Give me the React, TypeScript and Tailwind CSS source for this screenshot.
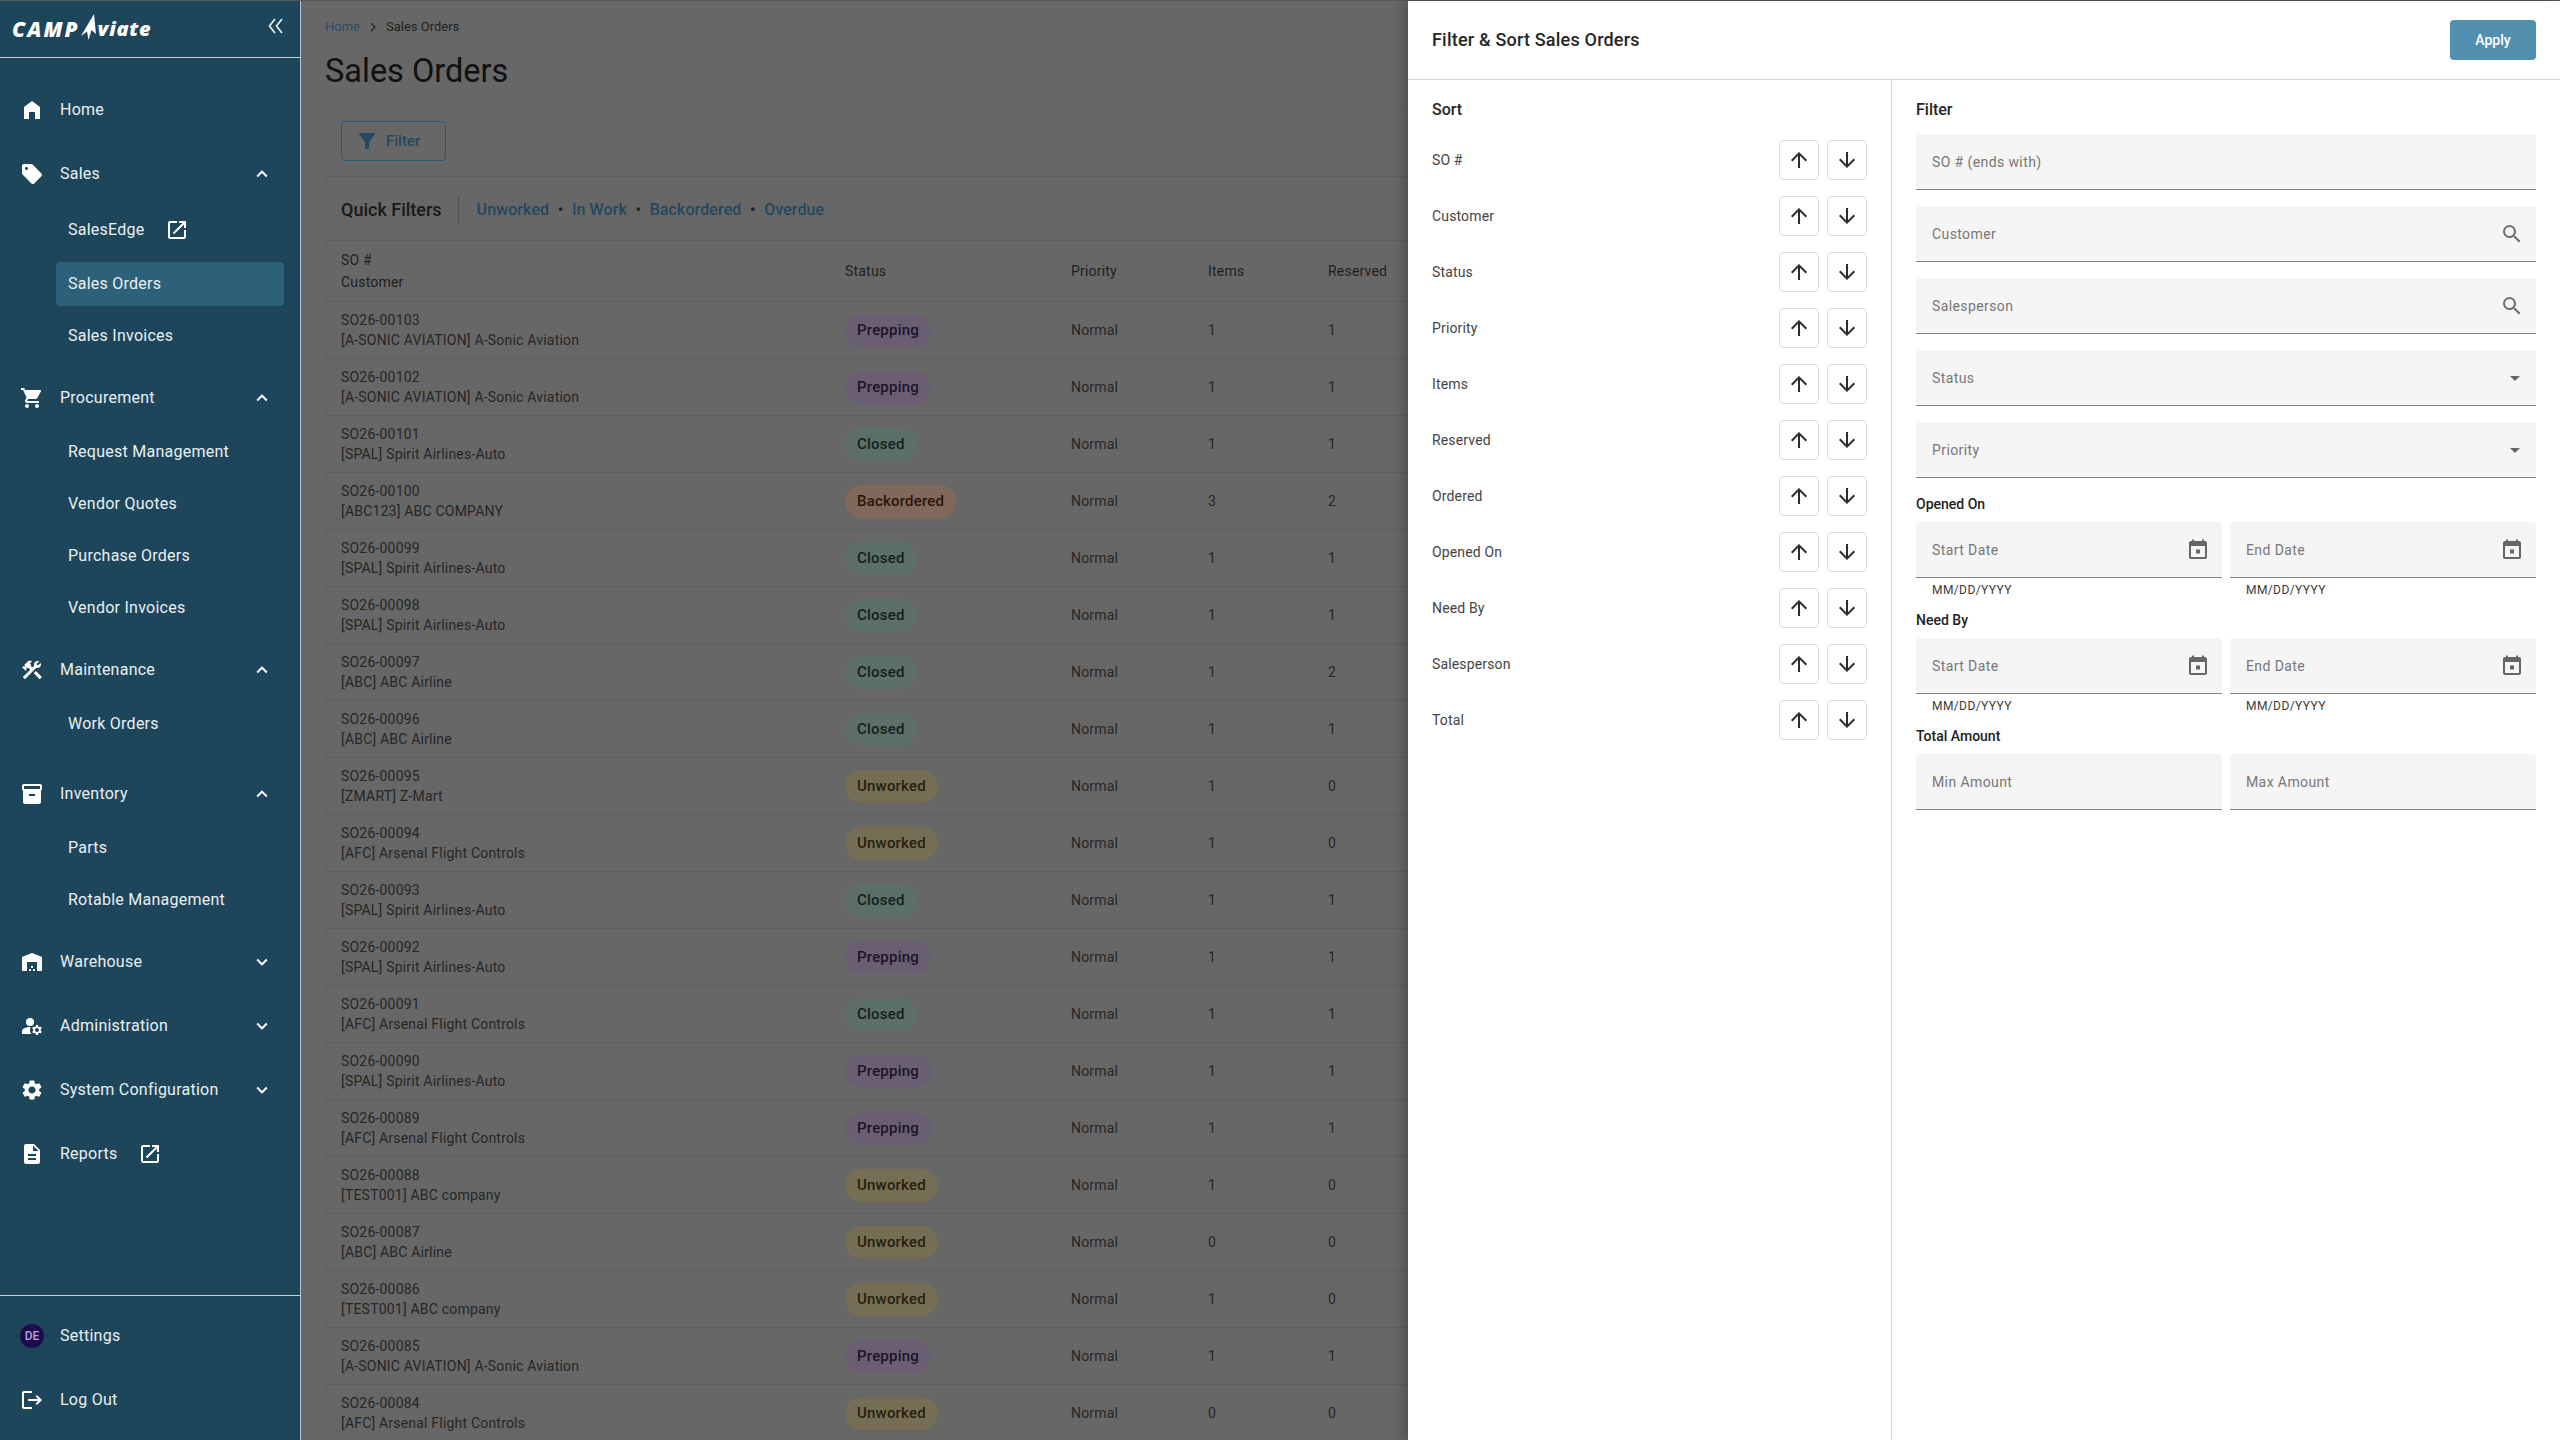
import React from "react";
import {
  MdHomeFilled, MdSell, MdShoppingCart, MdConstruction, MdInventory2, MdWarehouse, MdManageAccounts,
  MdSettings, MdDescription, MdLogout, MdOpenInNew, MdExpandLess, MdExpandMore, MdArrowUpward,
  MdArrowDownward, MdSearch, MdArrowDropDown, MdFilterAlt, MdChevronRight,
} from "react-icons/md";

const Top = ({ icon, label, chevron, ext, cls = "" }: { icon: React.ReactNode; label: string; chevron?: "up" | "down"; ext?: boolean; cls?: string }) => (
  <div className={`flex h-16 items-center pl-5 pr-[27px] text-[16px] tracking-[0.25px] text-[#e9eff2] ${cls}`}>
    <span className="flex w-6 justify-center text-white">{icon}</span>
    <span className="ml-4">{label}</span>
    {ext && <MdOpenInNew size={24} className="ml-[20px] text-white" />}
    {chevron && <span className="ml-auto text-white">{chevron === "up" ? <MdExpandLess size={22} /> : <MdExpandMore size={22} />}</span>}
  </div>
);

const Sub = ({ label, active, ext, cls = "" }: { label: string; active?: boolean; ext?: boolean; cls?: string }) => (
  <div className={`mx-0 ml-14 mr-4 flex h-11 items-center rounded pl-3 text-[16px] tracking-[0.25px] text-[#e9eff2] ${active ? "bg-[#2d6179]" : ""} ${cls}`}>
    <span>{label}</span>
    {ext && <MdOpenInNew size={24} className="ml-5 text-white" />}
  </div>
);

const Sidebar = () => (
  <aside className="flex h-full w-[301px] shrink-0 flex-col border-r border-[#a9c6d4] bg-[#1e465a]">
    <div className="flex h-[57px] shrink-0 items-center justify-between border-b border-[#bcd5e1] pl-3 pr-3">
      <div className="flex items-center text-white" aria-label="CAMP Aviate">
        <span className="font-['Open_Sans',sans-serif] text-[21px] font-extrabold italic leading-none tracking-[2px]">CAMP</span>
        <svg width="18" height="26" viewBox="0 0 18 26" className="-mt-1" fill="white">
          <path d="M14 0 L1 22 L7 17.5 L8.5 26 L11.5 16 L16 20 Z" />
        </svg>
        <span className="font-['Open_Sans',sans-serif] text-[20px] font-extrabold italic leading-none tracking-[0.7px]">viate</span>
      </div>
      <svg width="24" height="24" viewBox="0 0 24 24" fill="none" stroke="#e9eff2" strokeWidth="1.7" className="-mt-[7px]">
        <path d="M11 5 L5.5 12 L11 19" />
        <path d="M18 5 L12.5 12 L18 19" />
      </svg>
    </div>
    <nav className="flex-1 pt-5">
      <Top icon={<MdHomeFilled size={24} />} label="Home" />
      <Top icon={<MdSell size={24} />} label="Sales" chevron="up" />
      <div className="flex flex-col gap-2">
        <Sub label="SalesEdge" ext cls="h-12" />
        <Sub label="Sales Orders" active />
        <Sub label="Sales Invoices" />
      </div>
      <Top icon={<MdShoppingCart size={24} />} label="Procurement" chevron="up" cls="mt-2" />
      <div className="flex flex-col gap-2">
        <Sub label="Request Management" />
        <Sub label="Vendor Quotes" />
        <Sub label="Purchase Orders" />
        <Sub label="Vendor Invoices" />
      </div>
      <Top icon={<MdConstruction size={24} />} label="Maintenance" chevron="up" cls="mt-2" />
      <Sub label="Work Orders" />
      <Top icon={<MdInventory2 size={24} />} label="Inventory" chevron="up" cls="mt-4" />
      <div className="flex flex-col gap-2">
        <Sub label="Parts" />
        <Sub label="Rotable Management" />
      </div>
      <Top icon={<MdWarehouse size={24} />} label="Warehouse" chevron="down" cls="mt-2" />
      <Top icon={<MdManageAccounts size={24} />} label="Administration" chevron="down" />
      <Top icon={<MdSettings size={24} />} label="System Configuration" chevron="down" />
      <Top icon={<MdDescription size={24} />} label="Reports" ext />
    </nav>
    <div className="shrink-0 border-t border-[#bcd5e1] py-2">
      <Top icon={<span className="flex h-6 w-6 items-center justify-center rounded-full bg-[#1b0b4f] text-[12px] font-medium tracking-normal text-[#b9a2dc]">DE</span>} label="Settings" />
      <Top icon={<MdLogout size={24} />} label="Log Out" />
    </div>
  </aside>
);

type Row = [string, string, string, string, string];
const rows: Row[] = [
  ["SO26-00103", "[A-SONIC AVIATION] A-Sonic Aviation", "Prepping", "1", "1"],
  ["SO26-00102", "[A-SONIC AVIATION] A-Sonic Aviation", "Prepping", "1", "1"],
  ["SO26-00101", "[SPAL] Spirit Airlines-Auto", "Closed", "1", "1"],
  ["SO26-00100", "[ABC123] ABC COMPANY", "Backordered", "3", "2"],
  ["SO26-00099", "[SPAL] Spirit Airlines-Auto", "Closed", "1", "1"],
  ["SO26-00098", "[SPAL] Spirit Airlines-Auto", "Closed", "1", "1"],
  ["SO26-00097", "[ABC] ABC Airline", "Closed", "1", "2"],
  ["SO26-00096", "[ABC] ABC Airline", "Closed", "1", "1"],
  ["SO26-00095", "[ZMART] Z-Mart", "Unworked", "1", "0"],
  ["SO26-00094", "[AFC] Arsenal Flight Controls", "Unworked", "1", "0"],
  ["SO26-00093", "[SPAL] Spirit Airlines-Auto", "Closed", "1", "1"],
  ["SO26-00092", "[SPAL] Spirit Airlines-Auto", "Prepping", "1", "1"],
  ["SO26-00091", "[AFC] Arsenal Flight Controls", "Closed", "1", "1"],
  ["SO26-00090", "[SPAL] Spirit Airlines-Auto", "Prepping", "1", "1"],
  ["SO26-00089", "[AFC] Arsenal Flight Controls", "Prepping", "1", "1"],
  ["SO26-00088", "[TEST001] ABC company", "Unworked", "1", "0"],
  ["SO26-00087", "[ABC] ABC Airline", "Unworked", "0", "0"],
  ["SO26-00086", "[TEST001] ABC company", "Unworked", "1", "0"],
  ["SO26-00085", "[A-SONIC AVIATION] A-Sonic Aviation", "Prepping", "1", "1"],
  ["SO26-00084", "[AFC] Arsenal Flight Controls", "Unworked", "0", "0"],
];

const pillClass: Record<string, string> = {
  Prepping: "bg-[#6a5e72] text-[#1d1329]",
  Closed: "bg-[#5c6f69] text-[#141f1c]",
  Backordered: "bg-[#80685a] text-[#28160b]",
  Unworked: "bg-[#766e54] text-[#26200c]",
};

const gridCols = "grid grid-cols-[504px_226px_137px_120px_1fr] items-center";

const Main = () => (
  <main className="relative h-full min-w-0 flex-1 overflow-hidden bg-[#676767] pl-6 font-['Roboto',sans-serif] text-[#262626]">
    <div className="flex h-[52px] items-center text-[13px]">
      <span className="text-[#274e66]">Home</span>
      <MdChevronRight size={18} className="mx-1 text-[#2c2c2c]" />
      <span className="text-[#222]">Sales Orders</span>
    </div>
    <h1 className="flex h-9 items-center text-[32.5px] font-normal text-[#111]">Sales Orders</h1>
    <div className="mt-[18px] rounded-t-sm border-l border-t border-[#616161]">
      <div className="flex h-[69px] items-center border-b border-[#5f5f5f] pl-[15px]">
        <div className="-mt-0.5 flex h-10 w-[105px] items-center rounded border border-[#2a5a76] pl-[13px] text-[15px] font-medium text-[#234860]">
          <MdFilterAlt size={24} className="mr-[7px]" />
          Filter
        </div>
      </div>
      <div className="flex h-16 items-center border-b border-[#5f5f5f] pl-[15px] pt-0.5">
        <span className="text-[18px] font-medium text-[#191919]">Quick Filters</span>
        <span className="ml-4 mr-[18px] h-[30px] w-px bg-[#515151]" />
        <span className="flex items-center text-[16px] font-medium tracking-[0.1px] text-[#234860]">
          Unworked<span className="mx-[8.5px] text-[#222]">•</span>In Work<span className="mx-[8.5px] text-[#222]">•</span>Backordered<span className="mx-[8.5px] text-[#222]">•</span>Overdue
        </span>
      </div>
      <div className={`${gridCols} h-[61px] border-b border-[#5f5f5f] pl-[15px] text-[14px] tracking-[0.2px] text-[#1f1f1f]`}>
        <div className="flex flex-col leading-[22px]"><span>SO #</span><span>Customer</span></div>
        <span>Status</span><span>Priority</span><span>Items</span><span>Reserved</span>
      </div>
      {rows.map((r) => (
        <div key={r[0]} className={`${gridCols} h-[57px] border-b border-[#5f5f5f] pl-[15px] text-[14px] tracking-[0.2px] text-[#262626]`}>
          <div className="flex flex-col leading-5"><span>{r[0]}</span><span>{r[1]}</span></div>
          <div><span className={`inline-flex h-[33px] items-center rounded-full px-3 text-[15px] font-medium ${pillClass[r[2]]}`}>{r[2]}</span></div>
          <span>Normal</span><span>{r[3]}</span><span>{r[4]}</span>
        </div>
      ))}
    </div>
  </main>
);

const Field = ({ label, icon }: { label: string; icon?: React.ReactNode }) => (
  <div className="flex h-14 items-center justify-between rounded-t border-b border-[#858585] bg-[#f5f5f5] pl-4 pr-3">
    <span className="pt-0.5 text-[14px] tracking-[0.4px] text-[#777]">{label}</span>
    {icon}
  </div>
);

const Cal = () => (
  <svg width="24" height="24" viewBox="0 0 24 24" className="text-[#666]" fill="currentColor">
    <path fillRule="evenodd" d="M19 3h-1V1.5h-2V3H8V1.5H6V3H5c-1.11 0-2 .9-2 2v14c0 1.1.89 2 2 2h14c1.1 0 2-.9 2-2V5c0-1.1-.9-2-2-2zm0 16H5V8h14v11zM10 11.5h4v4h-4z" />
  </svg>
);

const DateField = ({ label }: { label: string }) => (
  <div className="flex flex-col">
    <Field label={label} icon={<Cal />} />
    <span className="mt-1 pl-4 text-[12px] leading-4 tracking-[0.4px] text-[#3a3a3a]">MM/DD/YYYY</span>
  </div>
);

const sortRows = ["SO #", "Customer", "Status", "Priority", "Items", "Reserved", "Ordered", "Opened On", "Need By", "Salesperson", "Total"];

const SortBtn = ({ children }: { children: React.ReactNode }) => (
  <div className="flex h-10 w-10 items-center justify-center rounded border border-[#dcdcdc] text-[#2b2b2b]">{children}</div>
);

const Panel = () => (
  <section className="absolute bottom-0 right-0 top-0 flex w-[1152px] flex-col bg-white font-['Roboto',sans-serif] shadow-[-6px_0_10px_rgba(0,0,0,0.2)]">
    <header className="flex h-[79px] shrink-0 items-center justify-between border-b border-[#d6d6d6] px-6">
      <h2 className="-mt-0.5 text-[18px] font-medium tracking-[0.2px] text-[#262626]">Filter &amp; Sort Sales Orders</h2>
      <div className="flex h-10 w-[86px] items-center justify-center rounded bg-[#5390b0] text-[14px] font-medium text-white">Apply</div>
    </header>
    <div className="flex min-h-0 flex-1">
      <div className="w-[484px] shrink-0 border-r border-[#d6d6d6] pl-6 pr-6 pt-[18px]">
        <h3 className="h-6 text-[16px] font-medium leading-6 text-[#262626]">Sort</h3>
        <div className="mt-[18px] flex flex-col gap-4">
          {sortRows.map((s) => (
            <div key={s} className="flex h-10 items-center justify-between">
              <span className="text-[14px] tracking-[0.15px] text-[#444]">{s}</span>
              <div className="flex gap-2">
                <SortBtn><MdArrowUpward size={24} /></SortBtn>
                <SortBtn><MdArrowDownward size={24} /></SortBtn>
              </div>
            </div>
          ))}
        </div>
      </div>
      <div className="min-w-0 flex-1 pl-6 pr-6 pt-[18px]">
        <h3 className="h-6 text-[16px] font-medium leading-6 text-[#262626]">Filter</h3>
        <div className="mt-3 flex flex-col gap-4">
          <Field label="SO # (ends with)" />
          <Field label="Customer" icon={<MdSearch size={24} className="text-[#6e6e6e]" />} />
          <Field label="Salesperson" icon={<MdSearch size={24} className="text-[#6e6e6e]" />} />
          <Field label="Status" icon={<MdArrowDropDown size={24} className="-mr-[3px] text-[#666]" />} />
          <Field label="Priority" icon={<MdArrowDropDown size={24} className="-mr-[3px] text-[#666]" />} />
        </div>
        <h4 className="mt-4 text-[14px] font-medium leading-5 text-[#222]">Opened On</h4>
        <div className="mt-2 grid grid-cols-2 gap-2">
          <DateField label="Start Date" />
          <DateField label="End Date" />
        </div>
        <h4 className="mt-3 text-[14px] font-medium leading-5 text-[#222]">Need By</h4>
        <div className="mt-2 grid grid-cols-2 gap-2">
          <DateField label="Start Date" />
          <DateField label="End Date" />
        </div>
        <h4 className="mt-3 text-[14px] font-medium leading-5 text-[#222]">Total Amount</h4>
        <div className="mt-2 grid grid-cols-2 gap-2">
          <Field label="Min Amount" />
          <Field label="Max Amount" />
        </div>
      </div>
    </div>
  </section>
);

export default function App() {
  return (
    <div className="flex h-[1440px] w-[2560px] flex-col overflow-hidden bg-[#676767] font-['Roboto',sans-serif]">
      <div className="h-px shrink-0 bg-[#565656]" />
      <div className="relative flex min-h-0 flex-1">
        <Sidebar />
        <Main />
        <Panel />
      </div>
    </div>
  );
}
